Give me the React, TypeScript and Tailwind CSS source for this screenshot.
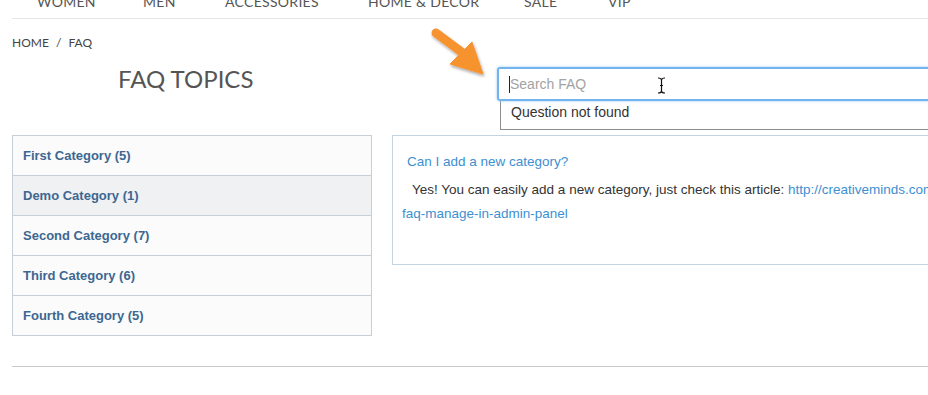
import React from 'react';

const navItems = [
  { label: 'WOMEN', w: 'w-[106px]' },
  { label: 'MEN', w: 'w-[82px]' },
  { label: 'ACCESSORIES', w: 'w-[143px]' },
  { label: 'HOME & DECOR', w: 'w-[156px]' },
  { label: 'SALE', w: 'w-[84px]' },
  { label: 'VIP', w: 'w-[60px]' },
];

const categories = [
  { name: 'First Category', count: 5 },
  { name: 'Demo Category', count: 1, active: true },
  { name: 'Second Category', count: 7 },
  { name: 'Third Category', count: 6 },
  { name: 'Fourth Category', count: 5 },
];

function Arrow() {
  return (
    <svg
      className="absolute left-[425px] top-[22px]"
      width="72"
      height="62"
      viewBox="0 0 72 62"
    >
      <defs>
        <filter id="sh" x="-20%" y="-20%" width="150%" height="150%">
          <feDropShadow dx="1" dy="2" stdDeviation="1.5" floodColor="#000" floodOpacity="0.35" />
        </filter>
      </defs>
      <g filter="url(#sh)" fill="#f7932f" stroke="#f7932f">
        <line x1="11" y1="11" x2="42" y2="34" strokeWidth="9" strokeLinecap="round" />
        <polygon points="47,20 58,52 25,42" strokeWidth="1" strokeLinejoin="round" />
      </g>
    </svg>
  );
}

function IBeam() {
  return (
    <svg className="absolute left-[158px] top-[8px]" width="9" height="17" viewBox="0 0 9 17">
      <path d="M1 1 Q4.5 1 4.5 3 L4.5 14 Q4.5 16 1 16 M8 1 Q4.5 1 4.5 3 M8 16 Q4.5 16 4.5 14 M3 8.5 H6" fill="none" stroke="#111" strokeWidth="1.2" />
    </svg>
  );
}

export default function App() {
  return (
    <div className="relative w-[928px] h-[395px] overflow-hidden bg-white font-['Liberation_Sans',Arial,sans-serif]">
      {/* top nav, scrolled so only the bottom of it shows */}
      <div className="ml-[12px] h-[19px] border-b border-[#e6e6e6] overflow-hidden">
        <ul className="flex pl-[25px] -mt-[6px] text-[14px] leading-[16px] text-[#555] font-['Lato',sans-serif] tracking-[0.3px]">
          {navItems.map(item => (
            <li key={item.label} className={`${item.w} shrink-0 whitespace-nowrap`}>
              {item.label}
            </li>
          ))}
        </ul>
      </div>

      <div className="pl-[12px] pt-[17px] text-[12px] leading-[14px] text-[#444] font-['Lato',sans-serif]">
        HOME <span className="mx-[4px]">/</span> FAQ
      </div>

      <div className="flex pl-[12px] mt-[17px] h-[68px]">
        <div className="w-[360px] shrink-0 pl-[106px]">
          <h1 className="-mt-[1px] text-[24px] leading-[26px] text-[#555] font-['Lato',sans-serif]">FAQ TOPICS</h1>
        </div>
        <div className="ml-[125px] w-[520px] shrink-0">
          <div className="relative h-[34px] border-2 border-[#74b4ee] rounded-[3px] shadow-[0_0_3px_#9ccaf3] flex items-center pl-[10px]">
            <span className="w-px h-[17px] bg-[#222]" />
            <span className="text-[14px] text-[#a3a3a3]">Search FAQ</span>
            <IBeam />
          </div>
          <div className="ml-[3px] h-[29px] border border-t-0 border-[#8e8e8e] pl-[10px] pt-[3px] text-[14px] leading-[16px] text-[#333]">
            Question not found
          </div>
        </div>
      </div>

      <div className="flex gap-[20px] pl-[12px]">
        <ul className="w-[360px] shrink-0 border border-b-0 border-[#c6d0da]">
          {categories.map(c => (
            <li
              key={c.name}
              className={`h-[40px] flex items-center pl-[10px] border-b border-[#c6d0da] text-[13px] font-bold text-[#3d6791] ${
                c.active ? 'bg-[#f0f1f3]' : 'bg-[#fbfbfb]'
              }`}
            >
              {c.name} ({c.count})
            </li>
          ))}
        </ul>

        <div className="w-[600px] shrink-0 h-[130px] border border-[#c3d3e0]">
          <div className="pl-[14px] pt-[16px] text-[13.5px] leading-[20px] text-[#3d8fd1]">Can I add a new category?</div>
          <p className="pl-[9px] mt-[6px] text-[13.5px] leading-[24px] text-[#333] whitespace-nowrap">
            <span className="pl-[10px]">Yes! You can easily add a new category, just check this article: </span>
            <span className="text-[#3d8fd1]">http://creativeminds.com/how-to-</span>
            <br />
            <span className="text-[#3d8fd1]">faq-manage-in-admin-panel</span>
          </p>
        </div>
      </div>

      <div className="ml-[12px] mt-[30px] h-px bg-[#c9c9c9]" />

      <Arrow />
    </div>
  );
}
